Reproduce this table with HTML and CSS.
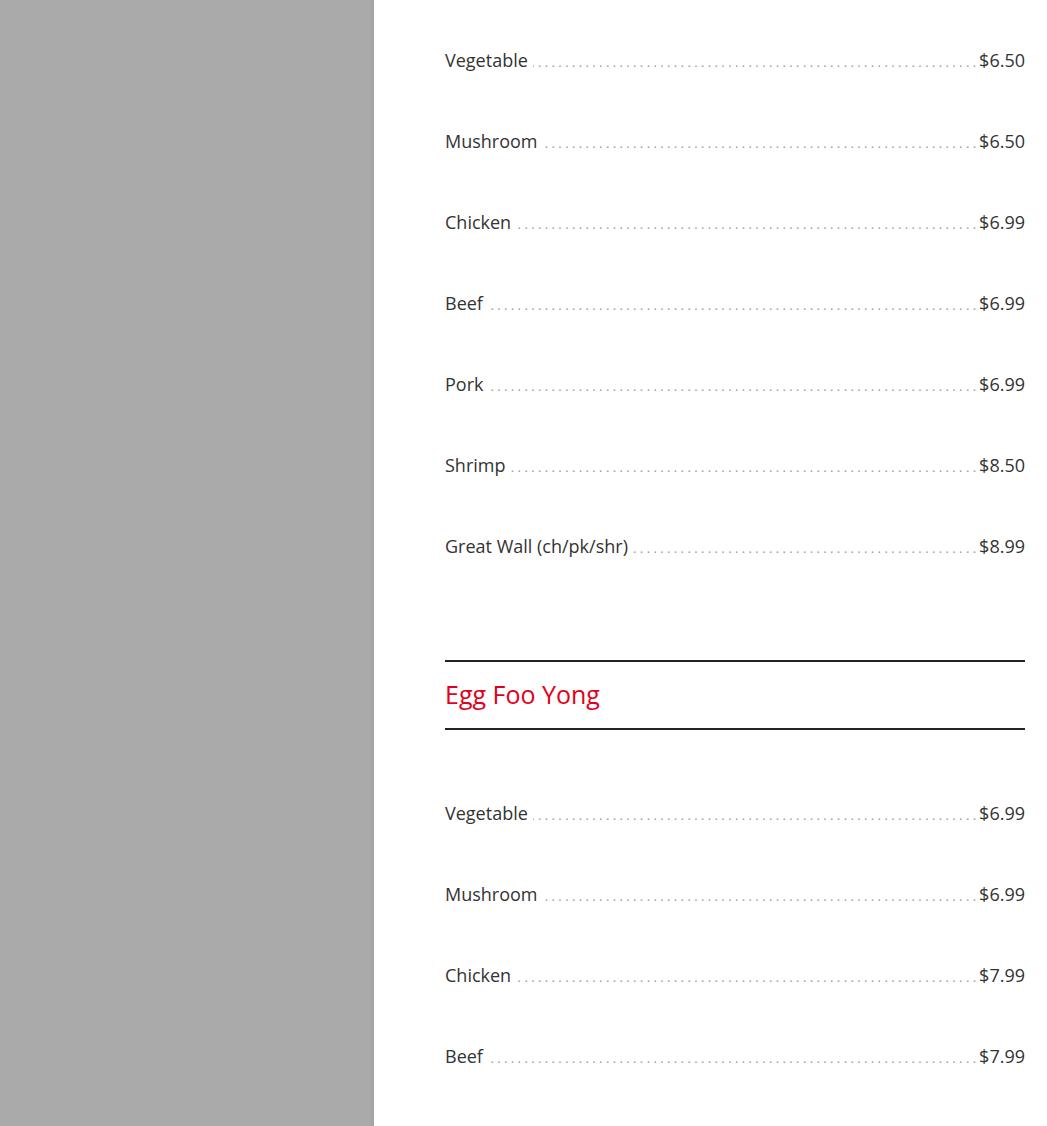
FILE: index.html
```html
<!DOCTYPE html>
<html>
<head>
<meta charset="utf-8">
<link rel="stylesheet" href="styles.css">
</head>
<body>
<div class="page">
  <aside class="sidebar"></aside>
  <main class="content">
    <ul class="menu">
      <li class="item"><span class="name">Vegetable</span><span class="leader"></span><span class="price">$6.50</span></li>
      <li class="item"><span class="name">Mushroom</span><span class="leader"></span><span class="price">$6.50</span></li>
      <li class="item"><span class="name">Chicken</span><span class="leader"></span><span class="price">$6.99</span></li>
      <li class="item"><span class="name">Beef</span><span class="leader"></span><span class="price">$6.99</span></li>
      <li class="item"><span class="name">Pork</span><span class="leader"></span><span class="price">$6.99</span></li>
      <li class="item"><span class="name">Shrimp</span><span class="leader"></span><span class="price">$8.50</span></li>
      <li class="item"><span class="name">Great Wall (ch/pk/shr)</span><span class="leader"></span><span class="price">$8.99</span></li>
    </ul>
    <h2 class="section-title">Egg Foo Yong</h2>
    <ul class="menu">
      <li class="item"><span class="name">Vegetable</span><span class="leader"></span><span class="price">$6.99</span></li>
      <li class="item"><span class="name">Mushroom</span><span class="leader"></span><span class="price">$6.99</span></li>
      <li class="item"><span class="name">Chicken</span><span class="leader"></span><span class="price">$7.99</span></li>
      <li class="item"><span class="name">Beef</span><span class="leader"></span><span class="price">$7.99</span></li>
    </ul>
  </main>
</div>
</body>
</html>
```

FILE: styles.css
```css
html, body {
  margin: 0;
  padding: 0;
  background: #ffffff;
  font-family: "Open Sans", "Liberation Sans", sans-serif;
  color: #333333;
}

.page {
  display: flex;
  height: 1126px;
  overflow: hidden;
}

.sidebar {
  width: 374px;
  flex: 0 0 374px;
  background: #aaaaaa;
  box-shadow: inset -3px 0 0 #a5a5a5;
}

.content {
  flex: 1 1 0;
  min-width: 0;
  padding: 20px 22px 0 71px;
}

.menu {
  list-style: none;
  margin: 0;
  padding: 0;
}

.item {
  display: flex;
  align-items: baseline;
  padding: 27px 0;
  font-size: 18px;
  line-height: 27px;
}

.name {
  flex: 0 0 auto;
  padding-right: 5px;
}

.leader {
  flex: 1 1 0;
  min-width: 0;
  display: flex;
  justify-content: flex-end;
  overflow: hidden;
  white-space: nowrap;
  margin-right: 3px;
  font-size: 13px;
  line-height: 14px;
  color: #9a9a9a;
}

.leader::before {
  flex: 0 0 auto;
  content: ". . . . . . . . . . . . . . . . . . . . . . . . . . . . . . . . . . . . . . . . . . . . . . . . . . . . . . . . . . . . . . . . . . . . . . . . . . . . . . . . . . . . . . . . . . . . . . . . . . . . . . . . . . . . . . . . . . . . . . . . . . . . . . . . . . .";
}

.price {
  flex: 0 0 auto;
}

.section-title {
  margin: 73px 0 43px 0;
  padding: 16px 0 18px 0;
  border-top: 2px solid #222222;
  border-bottom: 2px solid #222222;
  font-size: 25px;
  line-height: 32px;
  font-weight: 400;
  color: #e2001a;
}
```
